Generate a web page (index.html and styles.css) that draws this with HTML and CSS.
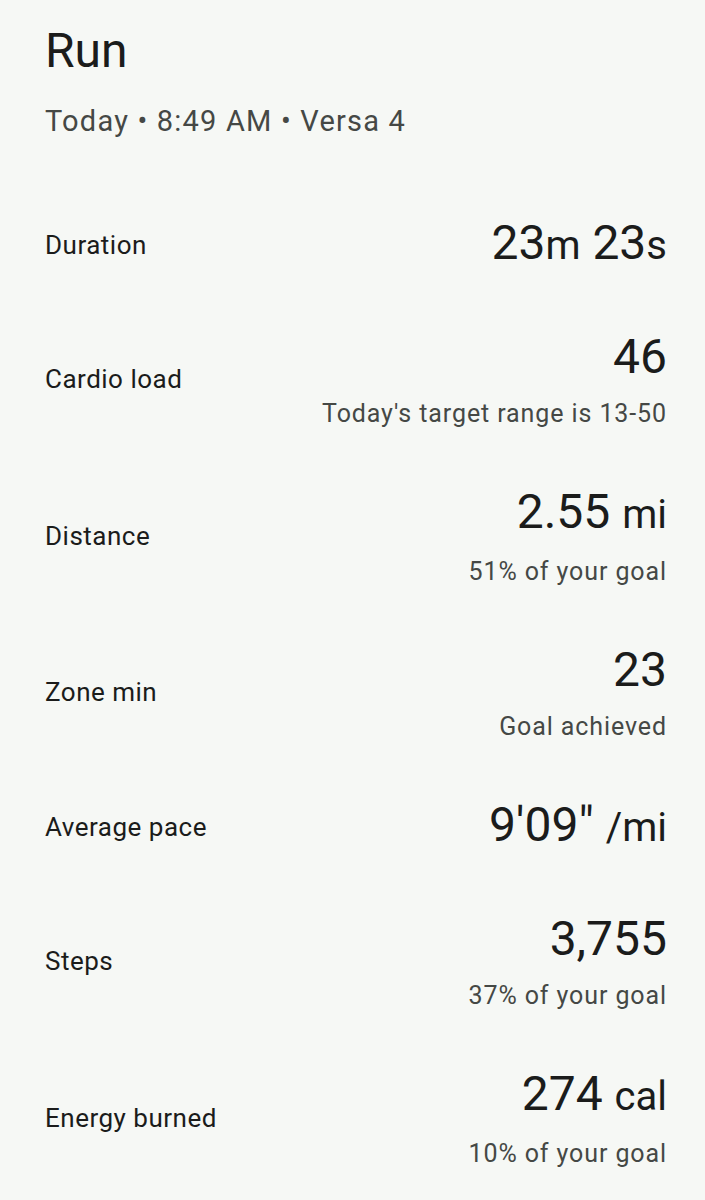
FILE: index.html
```html
<!DOCTYPE html>
<html lang="en">
<head>
  <meta charset="UTF-8" />
  <meta name="viewport" content="width=device-width, initial-scale=1.0" />
  <title>Run</title>
  <link rel="stylesheet" href="styles.css">
</head>
<body>
  <header class="header">
    <h1 class="title">Run</h1>
    <p class="meta">Today • 8:49 AM • Versa 4</p>
  </header>

  <ul class="stats">
    <li class="stat">
      <span class="stat-label">Duration</span>
      <div class="stat-right">
        <div class="stat-value">23<span class="unit">m</span> 23<span class="unit">s</span></div>
      </div>
    </li>
    <li class="stat">
      <span class="stat-label">Cardio load</span>
      <div class="stat-right">
        <div class="stat-value">46</div>
        <div class="stat-note">Today's target range is 13-50</div>
      </div>
    </li>
    <li class="stat">
      <span class="stat-label">Distance</span>
      <div class="stat-right">
        <div class="stat-value">2.55 <span class="unit">mi</span></div>
        <div class="stat-note">51% of your goal</div>
      </div>
    </li>
    <li class="stat">
      <span class="stat-label">Zone min</span>
      <div class="stat-right">
        <div class="stat-value">23</div>
        <div class="stat-note">Goal achieved</div>
      </div>
    </li>
    <li class="stat">
      <span class="stat-label">Average pace</span>
      <div class="stat-right">
        <div class="stat-value">9'09" <span class="unit">/mi</span></div>
      </div>
    </li>
    <li class="stat">
      <span class="stat-label">Steps</span>
      <div class="stat-right">
        <div class="stat-value">3,755</div>
        <div class="stat-note">37% of your goal</div>
      </div>
    </li>
    <li class="stat">
      <span class="stat-label">Energy burned</span>
      <div class="stat-right">
        <div class="stat-value">274 <span class="unit">cal</span></div>
        <div class="stat-note">10% of your goal</div>
      </div>
    </li>
  </ul>
</body>
</html>
```

FILE: styles.css
```css
html, body {
  margin: 0;
}
body {
  font-family: Roboto, "Noto Sans", sans-serif;
  background: #f6f8f5;
  color: #1b1c1b;
  padding: 21px 38px 0 45px;
}
.title {
  margin: 0;
  font-size: 48px;
  font-weight: 400;
  line-height: 60px;
}
.meta {
  margin: 22px 0 0;
  font-size: 29px;
  line-height: 36px;
  letter-spacing: 1.2px;
  color: #454845;
}
.stats {
  list-style: none;
  margin: 0;
  padding: 76px 0 0;
  display: flex;
  flex-direction: column;
  gap: 55px;
}
.stat {
  display: flex;
  justify-content: space-between;
  align-items: center;
}
.stat-label {
  font-size: 26px;
  font-weight: 400;
  letter-spacing: 0.5px;
}
.stat-right {
  text-align: right;
}
.stat-value {
  font-size: 48px;
  line-height: 56px;
}
.unit {
  font-size: 40px;
}
.stat-note {
  margin-top: 14px;
  font-size: 25px;
  line-height: 30px;
  letter-spacing: 0.9px;
  color: #454845;
}
```
